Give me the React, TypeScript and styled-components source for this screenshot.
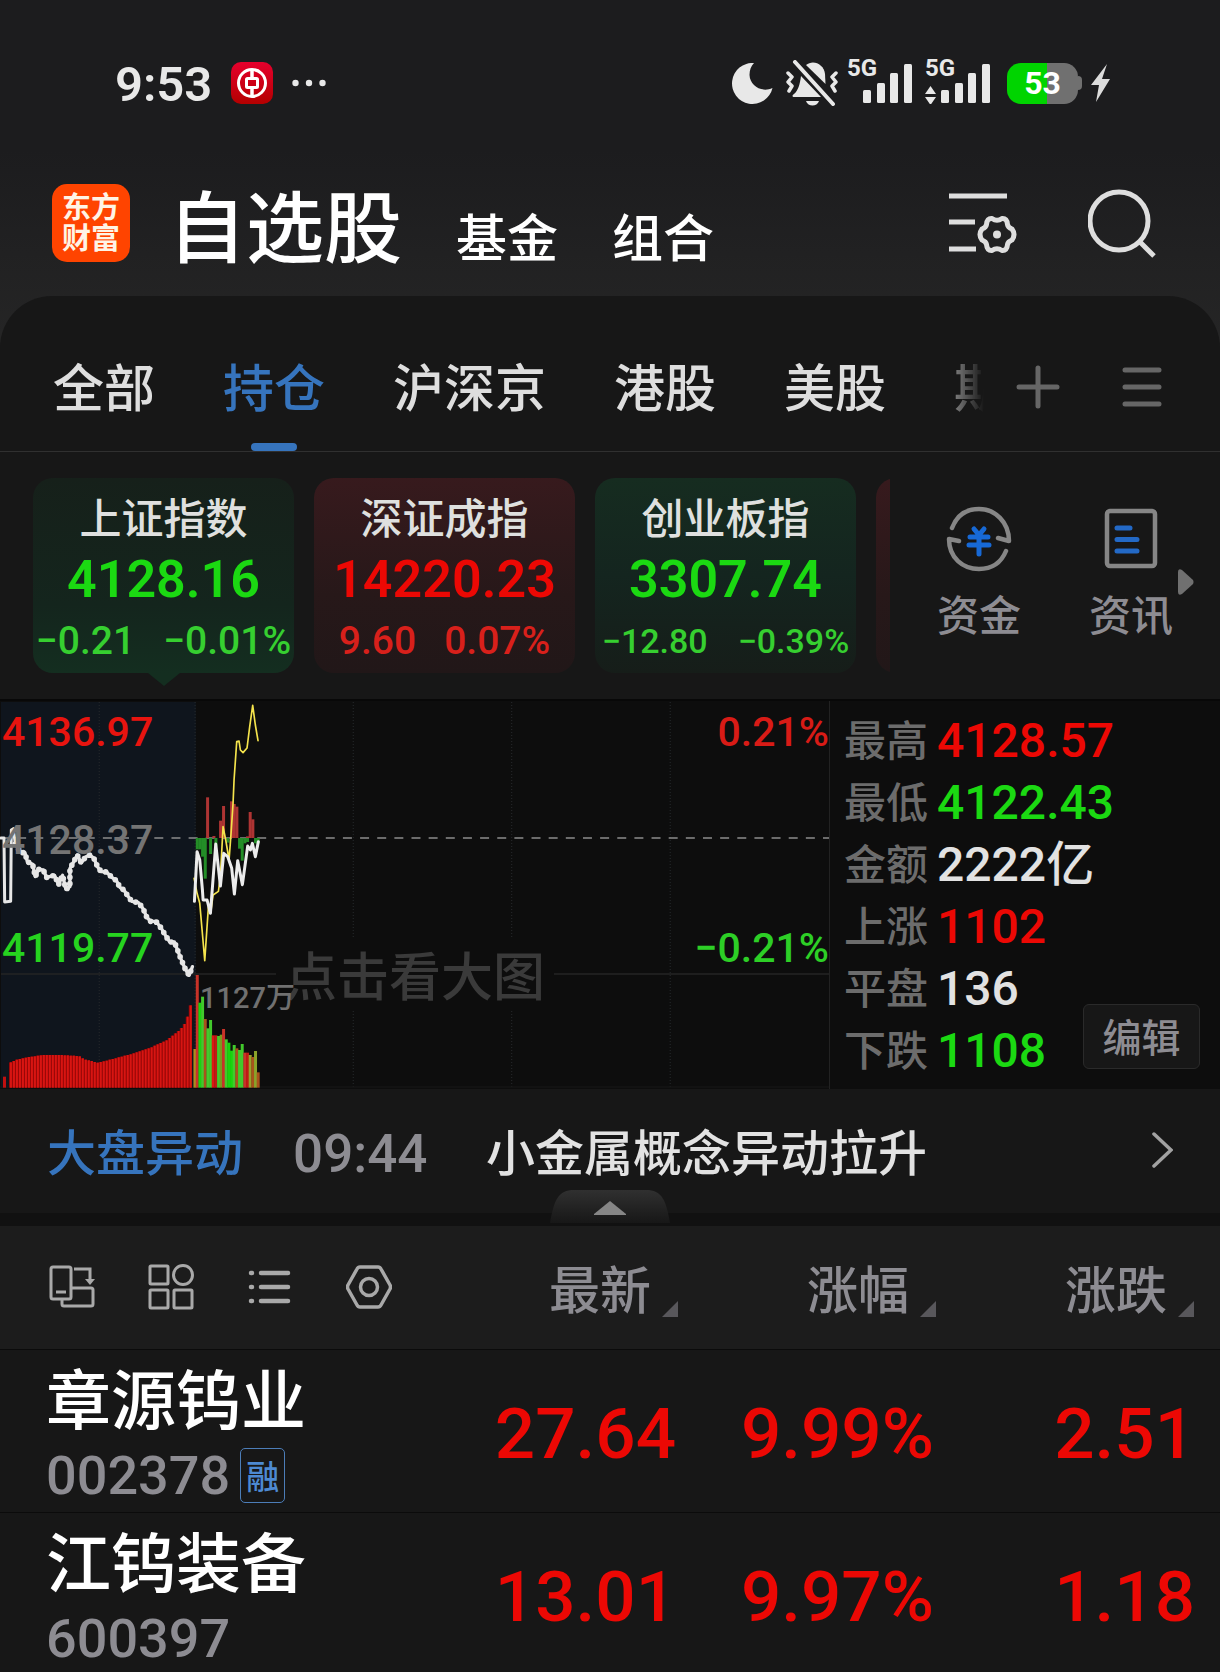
import React from "react";
import styled, { createGlobalStyle, css } from "styled-components";

const RED = "#ec0804";
const GREEN = "#1bd912";
const BLUE = "#3674bd";
const LIGHT = "#e2e2e2";
const MUTED = "#8d8c92";

const GlobalStyle = createGlobalStyle`
  *, *::before, *::after { box-sizing: border-box; }
  html { background: #171717; }
  body {
    margin: 0;
    background: #171717;
    color: ${LIGHT};
    font-family: "Noto Sans CJK SC", "Noto Sans", sans-serif;
    font-weight: 500;
    overflow: hidden;
  }
  button {
    margin: 0;
    padding: 0;
    border: 0;
    background: none;
    color: inherit;
    font: inherit;
    cursor: pointer;
  }
  a { color: inherit; text-decoration: none; }
  svg { display: block; }
`;

type Tone = "up" | "down" | "flat";
const toneColor = (tone: Tone) =>
  tone === "up" ? RED : tone === "down" ? GREEN : LIGHT;

const figures = css`
  font-family: Roboto, "Noto Sans CJK SC", sans-serif;
  font-weight: 500;
`;

const Screen = styled.main`
  min-height: 100vh;
  background: #171717;
`;

/* ---------- top area ---------- */

const Top = styled.header`
  background: linear-gradient(#1c1c1e 0, #1c1c1e 150px, #262626 100%);
  padding-bottom: 60px;
  margin-bottom: -60px;
`;

const StatusBar = styled.div`
  height: 166px;
  display: flex;
  align-items: center;
  justify-content: space-between;
  padding: 0 110px 0 115px;
  color: #e8e8e8;
`;

const StatusGroup = styled.div<{ $gap: number }>`
  display: flex;
  align-items: center;
  gap: ${(p) => p.$gap}px;
`;

const Clock = styled.time`
  padding-top: 4px;
  font-size: 49px;
  line-height: 48px;
  ${figures}
  font-weight: 600;
`;

const Signal = styled.div`
  position: relative;
  display: flex;
`;

const Network = styled.span`
  position: absolute;
  left: 0;
  top: -7px;
  font: 700 24px/24px Roboto, sans-serif;
`;

const Battery = styled.div`
  display: flex;
  align-items: center;

  &::after {
    content: "";
    width: 4px;
    height: 14px;
    border-radius: 0 4px 4px 0;
    background: #707070;
  }
`;

const BatteryBody = styled.div`
  width: 71px;
  height: 41px;
  border-radius: 14px;
  display: grid;
  place-items: center;
  background: linear-gradient(90deg, #00d400 57%, #707070 57%);
  color: #fff;
  font: 700 32px/32px Roboto, sans-serif;
`;

const Header = styled.div`
  height: 130px;
  display: flex;
  align-items: flex-start;
  justify-content: space-between;
  padding: 18px 64px 0 52px;
`;

const Brand = styled.div`
  display: flex;
  align-items: flex-start;
  gap: 38px;
`;

const Logo = styled.div`
  width: 78px;
  height: 78px;
  border-radius: 15px;
  background: #ff4400;
  color: #fff4e6;
  font-size: 29px;
  font-weight: 700;
  line-height: 31px;
  padding: 6px 0;
  text-align: center;
`;

const Sections = styled.nav`
  display: flex;
  align-items: baseline;
  gap: 54px;
  color: #fff;
  line-height: 78px;
`;

const Title = styled.h1`
  margin: 0;
  font-size: 78px;
  font-weight: 500;
  line-height: 78px;
`;

const SectionButton = styled.button`
  font-size: 51px;
  line-height: 52px;
`;

const HeaderTools = styled.div`
  display: flex;
  gap: 71px;
  padding-top: 4px;
`;

/* ---------- tabs ---------- */

const Panel = styled.section`
  position: relative;
  background: #171717;
  border-radius: 52px 52px 0 0;
`;

const TabBar = styled.div`
  height: 156px;
  display: flex;
  padding-left: 53px;
  border-bottom: 1px solid #303030;
`;

const TabList = styled.nav`
  flex: 1;
  min-width: 0;
  display: flex;
  gap: 68px;
  overflow: hidden;
  mask-image: linear-gradient(90deg, #000 calc(100% - 58px), transparent);
`;

const Tab = styled.button<{ $active?: boolean }>`
  position: relative;
  flex: none;
  padding: 63px 0 40px;
  font-size: 51px;
  line-height: 52px;
  color: ${(p) => (p.$active ? BLUE : "#dedede")};

  &::after {
    content: "";
    position: absolute;
    left: calc(50% - 23px);
    bottom: 0;
    width: 46px;
    height: 8px;
    border-radius: 4px;
    background: ${(p) => (p.$active ? BLUE : "transparent")};
  }
`;

const TabTools = styled.div`
  flex: none;
  width: 236px;
  display: flex;
  justify-content: space-between;
  align-items: center;
  padding: 26px 58px 0 32px;
`;

/* ---------- index cards ---------- */

const Indices = styled.div`
  display: flex;
  height: 247px;
  padding: 26px 0 0 33px;
`;

const CardStrip = styled.div`
  flex: 1;
  min-width: 0;
  display: flex;
  gap: 20px;
  overflow: hidden;
`;

const cardFill = {
  selected: "linear-gradient(#16201a, #14251d 65%, #142e20)",
  up: "linear-gradient(#371a1d, #271819 60%, #211718)",
  down: "linear-gradient(#162c20, #14251f 50%, #161d19)",
};

const Card = styled.button<{ $fill: keyof typeof cardFill }>`
  position: relative;
  flex: none;
  width: 261px;
  height: 195px;
  padding: 8px 0;
  border-radius: 20px;
  display: flex;
  flex-direction: column;
  align-items: center;
  background: ${(p) => cardFill[p.$fill]};

  &::after {
    content: "";
    display: ${(p) => (p.$fill === "selected" ? "block" : "none")};
    position: absolute;
    top: 100%;
    left: calc(50% - 16px);
    border: 16px solid transparent;
    border-top: 13px solid #142e20;
    border-bottom: 0;
  }
`;

const CardName = styled.span`
  font-size: 42px;
  line-height: 60px;
  color: #dfe0df;
`;

const CardValue = styled.span<{ $tone: Tone }>`
  ${figures}
  font-size: 52px;
  line-height: 68px;
  font-weight: 600;
  color: ${(p) => toneColor(p.$tone)};
`;

const CardChange = styled.span<{ $tone: Tone; $small?: boolean }>`
  display: flex;
  gap: ${(p) => (p.$small ? 30 : 28)}px;
  font-size: ${(p) => (p.$small ? 34 : 39)}px;
  line-height: 54px;
  white-space: nowrap;
  color: ${(p) => (p.$tone === "up" ? "#d8201b" : "#36cf30")};
  ${figures}
`;

const Shortcuts = styled.nav`
  flex: none;
  width: 330px;
  display: flex;
  align-items: flex-start;
  padding: 28px 26px 0 47px;
`;

const Shortcut = styled.a`
  width: 84px;
  margin-right: 68px;
  display: flex;
  flex-direction: column;
  align-items: center;
  gap: 11px;
  font-size: 42px;
  line-height: 60px;
  white-space: nowrap;
  color: ${MUTED};

  & + & { margin-right: 5px; }
`;

const MoreArrow = styled.button`
  align-self: flex-start;
  margin-top: 63px;
`;

/* ---------- chart ---------- */

const Market = styled.section`
  display: flex;
  height: 390px;
  background: #0d0d0d;
  border-top: 2px solid #080808;
`;

const ChartBox = styled.div`
  position: relative;
  flex: 1;
  min-width: 0;
  border-right: 1px solid #222;
`;

const ChartSvg = styled.svg`
  width: 100%;
  height: 100%;
`;

const ChartLabel = styled.span<{ $top: number; $right?: boolean; $color: string }>`
  position: absolute;
  top: ${(p) => p.$top}px;
  ${(p) => (p.$right ? "right: 0;" : "left: 2px;")}
  font-size: 41px;
  line-height: 44px;
  color: ${(p) => p.$color};
  ${figures}
`;

const VolumeLabel = styled.span`
  position: absolute;
  left: 200px;
  top: 275px;
  font-size: 29px;
  line-height: 44px;
  color: #707070;
  ${figures}
`;

const ChartHint = styled.span`
  position: absolute;
  left: 276px;
  top: 237px;
  padding: 0 9px;
  font-size: 52px;
  line-height: 72px;
  color: #3a3a3a;
  background: #0d0d0d;
`;

const Stats = styled.div`
  position: relative;
  flex: none;
  width: 390px;
  padding: 6px 0 0 14px;
`;

const StatList = styled.dl`
  margin: 0;
`;

const Stat = styled.div`
  display: flex;
  gap: 9px;
  line-height: 62px;

  dt { font-size: 42px; color: #6c6c6c; }
`;

const StatValue = styled.dd<{ $tone: Tone }>`
  margin: 0;
  height: 62px;
  padding-top: 3px;
  font-size: 48px;
  color: ${(p) => toneColor(p.$tone)};
  ${figures}
`;

const EditButton = styled.button`
  position: absolute;
  right: 20px;
  bottom: 20px;
  width: 117px;
  height: 65px;
  border: 1px solid #2a2a2a;
  border-radius: 6px;
  background: #171717;
  color: ${MUTED};
  font-size: 39px;
  line-height: 58px;
  padding-bottom: 3px;
`;

/* ---------- news ---------- */

const News = styled.a`
  position: relative;
  display: flex;
  align-items: center;
  height: 137px;
  padding: 0 47px 3px 47px;
  border-bottom: 13px solid #111;
  font-size: 49px;
  line-height: 60px;
  white-space: nowrap;
`;

const NewsTag = styled.span`
  color: ${BLUE};
`;

const NewsTime = styled.time`
  margin-left: 50px;
  padding-top: 8px;
  width: 193px;
  font-size: 53px;
  color: ${MUTED};
  ${figures}
`;

const NewsTitle = styled.span`
  flex: 1;
`;

const HandleWrap = styled.div`
  position: relative;
  display: flex;
  justify-content: center;
  height: 33px;
  margin: -36px 0 3px;
`;

/* ---------- stock table ---------- */

const Table = styled.table`
  width: 100%;
  border-collapse: collapse;
  table-layout: fixed;

  th, td { padding: 0; font-weight: 500; }
  thead th { background: #1c1c1c; height: 123px; }
  tr { border-bottom: 1px solid #0b0b0b; }
  tbody tr { height: 163px; }
`;

const Col = styled.col<{ $width?: number }>`
  width: ${(p) => (p.$width ? `${p.$width}px` : "auto")};
`;

const ViewTools = styled.div`
  display: flex;
  align-items: center;
  gap: 53px;
  padding: 0 0 0 49px;
`;

const SortHead = styled.th<{ $last?: boolean }>`
  text-align: right;
  && { padding-right: ${(p) => (p.$last ? 26 : 0)}px; }
`;

const SortButton = styled.button`
  display: inline-flex;
  align-items: flex-end;
  gap: 11px;
  font-size: 51px;
  line-height: 60px;
  color: ${MUTED};
  white-space: nowrap;

  &::after {
    content: "";
    border-left: 16px solid transparent;
    border-bottom: 16px solid #58575b;
  }
`;

const NameCell = styled.td`
  && { padding: 2px 0 0 46px; }
  white-space: nowrap;
`;

const StockName = styled.div`
  font-size: 65px;
  line-height: 76px;
  color: #fff;
`;

const StockCode = styled.div`
  display: flex;
  align-items: center;
  gap: 10px;
  font-size: 54px;
  line-height: 60px;
  height: 60px;
  margin-top: 12px;
  color: ${MUTED};
  ${figures}
`;

const Badge = styled.span`
  width: 45px;
  height: 55px;
  border: 1px solid #4c7db8;
  border-radius: 5px;
  text-align: center;
  font-family: "Noto Sans CJK SC", sans-serif;
  font-weight: 500;
  font-size: 33px;
  line-height: 52px;
  color: #4d8ad2;
`;

const Figure = styled.td<{ $last?: boolean }>`
  && { padding: 6px ${(p) => (p.$last ? 25 : 2)}px 0 0; }
  text-align: right;
  font-size: 71px;
  line-height: 80px;
  color: ${RED};
  white-space: nowrap;
  ${figures}
`;

/* ---------- icons ---------- */

const BankIcon = () => (
  <svg width="42" height="42" viewBox="0 0 42 42" fill="none" stroke="#fff">
    <defs>
      <linearGradient id="bank" x1="0" y1="0" x2="0" y2="1">
        <stop offset="0" stopColor="#e6002d" />
        <stop offset="1" stopColor="#b40000" />
      </linearGradient>
    </defs>
    <rect width="42" height="42" rx="10" fill="url(#bank)" stroke="none" />
    <circle cx="21" cy="21" r="13.5" strokeWidth="3" />
    <rect x="15.5" y="16.5" width="11" height="9" rx="1" strokeWidth="3" />
    <path d="M21 7v9M21 26v9" strokeWidth="3.5" />
  </svg>
);

const DotsIcon = () => (
  <svg width="34" height="8" viewBox="0 0 34 8" fill="#e8e8e8">
    <circle cx="3.5" cy="4" r="3.2" />
    <circle cx="17" cy="4" r="3.2" />
    <circle cx="30.5" cy="4" r="3.2" />
  </svg>
);

const MoonIcon = () => (
  <svg width="41" height="41" viewBox="0 0 41 41" fill="#e8e8e8">
    <path d="M22 0A20.5 20.5 0 1 0 40.500 25C30 30 18 23 17.500 12C17.500 7 19 3 22 0Z" />
  </svg>
);

const MutedBellIcon = () => (
  <svg width="52" height="46" viewBox="0 0 52 46" fill="none">
    <g fill="#e8e8e8">
      <path d="M20 5C27-1 38 4 39 14L39.500 24Z" />
      <path d="M15 16L35 37H8C6 37 6 35 8 34C12 31 14 24 15 16Z" />
      <path d="M20 41H33C31 47 22 47 20 41Z" />
    </g>
    <path d="M9 2L47 44" stroke="#e8e8e8" strokeWidth="4" strokeLinecap="round" />
    <path
      d="M2 13L6 17L2 22L6 26L3 31M50 13L46 17L50 22L46 26L49 31"
      stroke="#e8e8e8"
      strokeWidth="3.5"
      strokeLinecap="round"
      strokeLinejoin="round"
    />
  </svg>
);

const SignalBars = ({ transfer }: { transfer?: boolean }) => (
  <svg width="65" height="41" viewBox="0 0 65 41" fill="#e8e8e8">
    {transfer && <path d="M5.500 23L11 31H0ZM5.500 42L11 34H0Z" />}
    <rect x="16" y="27" width="8" height="13" rx="1.500" />
    <rect x="30" y="20" width="8" height="20" rx="1.500" />
    <rect x="43" y="10" width="8" height="30" rx="1.500" />
    <rect x="57" y="1" width="8" height="39" rx="1.500" />
  </svg>
);

const BoltIcon = () => (
  <svg width="19" height="40" viewBox="0 0 19 40" fill="#dcdcdc">
    <path d="M16 1L0 22H8L5 39L19 16H11Z" />
  </svg>
);

const ListSettingsIcon = () => (
  <svg width="70" height="64" viewBox="0 0 70 64" fill="none" stroke="#dedede">
    <path d="M2 5H60M2 31H28M2 58H29" strokeWidth="5" />
    <path
      d="M45 27.500Q50 31 55 27.500Q60 27 60.500 33.500Q61 36.500 65 38Q69 43.500 65 49Q61 50.500 60.500 53.500Q60 60 55 59.500Q50 56 45 59.500Q40 60 39.500 53.500Q39 50.500 35 49Q31 43.500 35 38Q39 36.500 39.500 33.500Q40 27 45 27.500Z"
      strokeWidth="5"
      strokeLinejoin="round"
    />
    <circle cx="50" cy="43.500" r="4" fill="#dedede" stroke="none" />
  </svg>
);

const SearchIcon = () => (
  <svg width="68" height="70" viewBox="0 0 68 70" fill="none" stroke="#dedede" strokeWidth="5">
    <circle cx="31" cy="33" r="29" />
    <path d="M52 54L66 68" />
  </svg>
);

const PlusIcon = () => (
  <svg width="44" height="44" viewBox="0 0 44 44" stroke="#666" strokeWidth="5" strokeLinecap="round">
    <path d="M22 3V41M3 22H41" />
  </svg>
);

const MenuIcon = () => (
  <svg width="40" height="44" viewBox="0 0 40 44" stroke="#666" strokeWidth="5" strokeLinecap="round">
    <path d="M3 5H37M3 22H37M3 39H37" />
  </svg>
);

const FundIcon = () => (
  <svg width="66" height="66" viewBox="0 0 66 66" fill="none" strokeLinecap="round" strokeLinejoin="round">
    <path d="M6 22C11 9 21 3 33 3C49 3 63 16 63 35L52 32M60 45C55 57 45 63 33 63C17 63 3 52 3 33L13 35" stroke="#868686" strokeWidth="4.500" />
    <path d="M28 23L33 29L38 23M24 31H42M23 39H43M33 30V48" stroke="#1769d6" strokeWidth="5" />
  </svg>
);

const NewsIcon = () => (
  <svg width="54" height="66" viewBox="0 0 54 66" fill="none" strokeLinecap="round">
    <rect x="3" y="5" width="48" height="55" rx="3" stroke="#868686" strokeWidth="4.500" />
    <path d="M13 22H26M13 33.500H33M13 45H33" stroke="#2369c6" strokeWidth="5" />
  </svg>
);

const RightTriangle = () => (
  <svg width="16" height="26" viewBox="0 0 16 26" fill="#707070">
    <path d="M0 3Q0-1 4 1L15 11Q16 13 15 15L4 25Q0 27 0 23Z" />
  </svg>
);

const ChevronIcon = () => (
  <svg width="21" height="38" viewBox="0 0 21 38" fill="none" stroke="#a2a2a2" strokeWidth="3.500" strokeLinecap="round">
    <path d="M2 3L19 19L2 35" />
  </svg>
);

const HandleIcon = () => (
  <svg width="120" height="33" viewBox="0 0 120 33">
    <defs>
      <linearGradient id="handle" x1="0" y1="0" x2="0" y2="1">
        <stop offset="0" stopColor="#303030" />
        <stop offset="1" stopColor="#171717" />
      </linearGradient>
    </defs>
    <path d="M0 33C4 10 8 0 24 0H96C112 0 116 10 120 33Z" fill="url(#handle)" />
    <path d="M60 11L76 24V25H44V24Z" fill="#868686" />
  </svg>
);

const RotateIcon = () => (
  <svg width="46" height="44" viewBox="0 0 46 44" fill="none" stroke="#a9a9a9" strokeWidth="3">
    <rect x="2" y="2" width="20" height="32" rx="2" />
    <path d="M13 34V39Q13 41 15 41H42Q44 41 44 39V25Q44 23 42 23H22M25 4H41V15M7 27H17" />
    <path d="M36 14H46L41 20Z" fill="#a9a9a9" stroke="none" />
  </svg>
);

const GridIcon = () => (
  <svg width="46" height="46" viewBox="0 0 46 46" fill="none" stroke="#a9a9a9" strokeWidth="3">
    <rect x="2" y="2" width="18" height="18" rx="1" />
    <circle cx="35" cy="11" r="9.500" />
    <rect x="2" y="26" width="18" height="18" rx="1" />
    <rect x="26" y="26" width="18" height="18" rx="1" />
  </svg>
);

const ListIcon = () => (
  <svg width="46" height="46" viewBox="0 0 46 46" fill="none" stroke="#a9a9a9" strokeWidth="4.500" strokeLinecap="round">
    <path d="M14 9H41M14 23H41M14 37H41M4 9H5M4 23H5M4 37H5" />
  </svg>
);

const HexIcon = () => (
  <svg width="46" height="46" viewBox="0 0 46 46" fill="none" stroke="#a9a9a9" strokeWidth="3.500" strokeLinejoin="round">
    <path d="M14 3H32Q34 3 35 5L44 21Q45 23 44 25L35 41Q34 43 32 43H14Q12 43 11 41L2 25Q1 23 2 21L11 5Q12 3 14 3Z" />
    <circle cx="23" cy="23" r="8.500" />
  </svg>
);

/* ---------- chart data (three units to a pixel) ---------- */

const AUCTION_START = "3,444 12,444 14,636 32,634 34,420 40,416 46,462";
const AUCTION_REST =
  "46,462 62,488 75,488 82,515 98,523 106,560 116,538 130,540 140,562 164,556 176,584 188,556 198,598 210,590 210,536 222,514 232,495 244,518 258,500 270,495 282,505 294,532 304,545 320,546 336,562 350,572 360,592 372,600 384,618 396,634 416,638 430,656 440,680 452,694 468,694 484,714 498,738 510,756 524,756 534,782 544,808 556,836 568,856 578,830";
const PRICE_LINE =
  "584,634 592,485 600,510 608,600 610,630 622,630 632,670 648,462 662,588 672,490 684,500 696,535 704,612 714,512 728,584 744,468 752,480 758,460 767,500 776,455";
const AVERAGE_LINE =
  "583,565 592,610 600,640 615,812 626,650 634,660 640,615 656,604 662,560 670,410 678,450 688,510 694,430 700,340 703,270 711,155 718,153 722,180 730,188 742,174 750,110 759,46 767,105 775,152";

const AUCTION_VOLUME: [number, number][] = [
  [27, 1118], [45, 1110], [80, 1102], [125, 1095], [180, 1095], [236, 1098],
  [250, 1108], [292, 1118], [340, 1106], [400, 1090], [450, 1073],
  [500, 1050], [540, 1018], [556, 996], [565, 968], [573, 933],
];

const volumeTop = (x: number) => {
  const i = AUCTION_VOLUME.findIndex(([px]) => px >= x);
  if (i <= 0) return AUCTION_VOLUME[i === 0 ? 0 : AUCTION_VOLUME.length - 1][1];
  const [x0, y0] = AUCTION_VOLUME[i - 1];
  const [x1, y1] = AUCTION_VOLUME[i];
  return Math.round(y0 + ((y1 - y0) * (x - x0)) / (x1 - x0));
};

const auctionBars = Array.from({ length: 61 }, (_, i) => 30 + i * 9);

const TRADE_VOLUME: [number, number, string][] = [
  [581, 1077, "#a98f20"], [588, 855, "#c83228"], [596, 938, "#19d40d"],
  [604, 920, "#42c92c"], [612, 987, "#a8521b"], [620, 1015, "#42c92c"],
  [628, 990, "#42c92c"], [636, 1036, "#dc1713"], [644, 1036, "#c01a14"],
  [652, 1038, "#42c92c"], [660, 1034, "#7a991f"], [667, 1017, "#c83228"],
  [675, 1048, "#42c92c"], [683, 1058, "#19d40d"], [691, 1082, "#19d40d"],
  [699, 1065, "#42c92c"], [707, 1075, "#a8521b"], [715, 1080, "#42c92c"],
  [723, 1062, "#42c92c"], [731, 1088, "#c83228"], [739, 1088, "#c01a14"],
  [747, 1095, "#99a02c"], [755, 1101, "#a8521b"], [763, 1083, "#8aa32a"],
  [771, 1147, "#a8521b"],
];

const RISES: [number, number][] = [
  [619, 322], [638, 438], [658, 392], [667, 348], [691, 334], [699, 342],
  [707, 350], [739, 439], [747, 366], [755, 388],
];
const FALLS: [number, number][] = [
  [588, 478], [596, 478], [604, 500], [612, 566], [628, 492], [644, 470],
  [680, 458], [715, 476], [723, 512], [731, 460], [739, 456], [763, 460],
  [771, 460],
];

const Chart = () => (
  <ChartSvg viewBox="0 33 2490 1164" preserveAspectRatio="none" role="img" aria-label="上证指数">
    <rect x="3" y="36" width="585" height="1158" fill="#0f151d" />
    <g stroke="#272a2d" strokeWidth="3" strokeDasharray="3 6">
      <path d="M298 36V1190M586 36V1190M1061 36V1190M1537 36V1190M2013 36V1190" />
    </g>
    <path d="M3 852H2490" stroke="#242424" strokeWidth="4" />
    <path d="M0 1191H2490" stroke="#191919" strokeWidth="3" />
    <path d="M0 444H2490" stroke="#8c8c8c" strokeWidth="5" strokeDasharray="27 24.500" />
    <rect x="9" y="1160" width="9" height="33" fill="#c01010" />
    {auctionBars.map((x) => (
      <React.Fragment key={x}>
        <rect x={x - 3} y={volumeTop(x)} width="9" height={1193 - volumeTop(x)} fill="#970808" />
        <rect x={x} y={volumeTop(x)} width="6" height={1193 - volumeTop(x)} fill="#d81512" />
      </React.Fragment>
    ))}
    {TRADE_VOLUME.map(([x, y, fill]) => (
      <rect key={x} x={x} y={y} width="9" height={1193 - y} fill={fill} />
    ))}
    {RISES.map(([x, y]) => (
      <rect key={x} x={x} y={y} width="9" height={444 - y} fill="#ae3433" />
    ))}
    {FALLS.map(([x, y]) => (
      <rect key={x} x={x} y="444" width="9" height={y - 444} fill="#238d27" />
    ))}
    <g fill="none" strokeLinejoin="round" strokeLinecap="round">
      <polyline points={AUCTION_START} stroke="#e6e6e6" strokeWidth="9" />
      <polyline points={AUCTION_REST} stroke="#e6e6e6" strokeWidth="10" />
      <polyline points={AUCTION_REST} stroke="#e6e6e6" strokeWidth="17" strokeDasharray="0 19" />
      <polyline points={AVERAGE_LINE} stroke="#f4e34c" strokeWidth="5" />
      <polyline points={PRICE_LINE} stroke="#ececec" strokeWidth="9" />
    </g>
  </ChartSvg>
);

/* ---------- content ---------- */

const tabs = ["全部", "持仓", "沪深京", "港股", "美股", "期"];

const indices: {
  name: string; value: string; change: string; percent: string;
  tone: Tone; fill: keyof typeof cardFill; small?: boolean;
}[] = [
  { name: "上证指数", value: "4128.16", change: "−0.21", percent: "−0.01%", tone: "down", fill: "selected" },
  { name: "深证成指", value: "14220.23", change: "9.60", percent: "0.07%", tone: "up", fill: "up" },
  { name: "创业板指", value: "3307.74", change: "−12.80", percent: "−0.39%", tone: "down", fill: "down", small: true },
];

const stats: [string, string, Tone][] = [
  ["最高", "4128.57", "up"],
  ["最低", "4122.43", "down"],
  ["金额", "2222亿", "flat"],
  ["上涨", "1102", "up"],
  ["平盘", "136", "flat"],
  ["下跌", "1108", "down"],
];

const stocks = [
  { name: "章源钨业", code: "002378", margin: true, figures: ["27.64", "9.99%", "2.51"] },
  { name: "江钨装备", code: "600397", margin: false, figures: ["13.01", "9.97%", "1.18"] },
];

const columns = ["最新", "涨幅", "涨跌"];

export default function App() {
  return (
    <Screen>
      <GlobalStyle />
      <Top>
        <StatusBar>
          <StatusGroup $gap={19}>
            <Clock>9:53</Clock>
            <BankIcon />
            <DotsIcon />
          </StatusGroup>
          <StatusGroup $gap={17}>
            <StatusGroup $gap={9}>
              <StatusGroup $gap={13}>
                <MoonIcon />
                <MutedBellIcon />
              </StatusGroup>
              <StatusGroup $gap={13}>
                <Signal>
                  <Network>5G</Network>
                  <SignalBars />
                </Signal>
                <Signal>
                  <Network>5G</Network>
                  <SignalBars transfer />
                </Signal>
              </StatusGroup>
            </StatusGroup>
            <StatusGroup $gap={9}>
              <Battery>
                <BatteryBody>53</BatteryBody>
              </Battery>
              <BoltIcon />
            </StatusGroup>
          </StatusGroup>
        </StatusBar>
        <Header>
          <Brand>
            <Logo>东方<br />财富</Logo>
            <Sections>
              <Title>自选股</Title>
              <SectionButton>基金</SectionButton>
              <SectionButton>组合</SectionButton>
            </Sections>
          </Brand>
          <HeaderTools>
            <button aria-label="设置"><ListSettingsIcon /></button>
            <button aria-label="搜索"><SearchIcon /></button>
          </HeaderTools>
        </Header>
      </Top>

      <Panel>
        <TabBar>
          <TabList>
            {tabs.map((tab, i) => (
              <Tab key={tab} $active={i === 1}>{tab}</Tab>
            ))}
          </TabList>
          <TabTools>
            <button aria-label="添加"><PlusIcon /></button>
            <button aria-label="菜单"><MenuIcon /></button>
          </TabTools>
        </TabBar>

        <Indices>
          <CardStrip>
            {indices.map((item) => (
              <Card key={item.name} $fill={item.fill}>
                <CardName>{item.name}</CardName>
                <CardValue $tone={item.tone}>{item.value}</CardValue>
                <CardChange $tone={item.tone} $small={item.small}>
                  <span>{item.change}</span>
                  <span>{item.percent}</span>
                </CardChange>
              </Card>
            ))}
            <Card $fill="up" aria-hidden="true" tabIndex={-1} />
          </CardStrip>
          <Shortcuts>
            <Shortcut href="#funds"><FundIcon />资金</Shortcut>
            <Shortcut href="#news"><NewsIcon />资讯</Shortcut>
            <MoreArrow aria-label="更多"><RightTriangle /></MoreArrow>
          </Shortcuts>
        </Indices>
      </Panel>

      <Market>
        <ChartBox>
          <Chart />
          <ChartHint>点击看大图</ChartHint>
          <ChartLabel $top={9} $color="#e8140f">4136.97</ChartLabel>
          <ChartLabel $top={117} $color="#747474">4128.37</ChartLabel>
          <ChartLabel $top={225} $color="#26d31f">4119.77</ChartLabel>
          <ChartLabel $top={9} $right $color="#d81b16">0.21%</ChartLabel>
          <ChartLabel $top={225} $right $color="#2dcf26">−0.21%</ChartLabel>
          <VolumeLabel>1127万</VolumeLabel>
        </ChartBox>
        <Stats>
          <StatList>
            {stats.map(([label, value, tone]) => (
              <Stat key={label}>
                <dt>{label}</dt>
                <StatValue $tone={tone}>{value}</StatValue>
              </Stat>
            ))}
          </StatList>
          <EditButton>编辑</EditButton>
        </Stats>
      </Market>

      <News href="#movers">
        <NewsTag>大盘异动</NewsTag>
        <NewsTime>09:44</NewsTime>
        <NewsTitle>小金属概念异动拉升</NewsTitle>
        <ChevronIcon />
      </News>
      <HandleWrap>
        <button aria-label="收起"><HandleIcon /></button>
      </HandleWrap>

      <Table>
        <colgroup>
          <Col />
          <Col $width={258} />
          <Col $width={258} />
          <Col $width={284} />
        </colgroup>
        <thead>
          <tr>
            <th>
              <ViewTools>
                <button aria-label="横屏"><RotateIcon /></button>
                <button aria-label="宫格"><GridIcon /></button>
                <button aria-label="列表"><ListIcon /></button>
                <button aria-label="选项"><HexIcon /></button>
              </ViewTools>
            </th>
            {columns.map((column, i) => (
              <SortHead key={column} scope="col" $last={i === 2}>
                <SortButton>{column}</SortButton>
              </SortHead>
            ))}
          </tr>
        </thead>
        <tbody>
          {stocks.map((stock) => (
            <tr key={stock.code}>
              <NameCell>
                <StockName>{stock.name}</StockName>
                <StockCode>
                  {stock.code}
                  {stock.margin && <Badge>融</Badge>}
                </StockCode>
              </NameCell>
              {stock.figures.map((figure, i) => (
                <Figure key={i} $last={i === 2}>{figure}</Figure>
              ))}
            </tr>
          ))}
        </tbody>
      </Table>
    </Screen>
  );
}
